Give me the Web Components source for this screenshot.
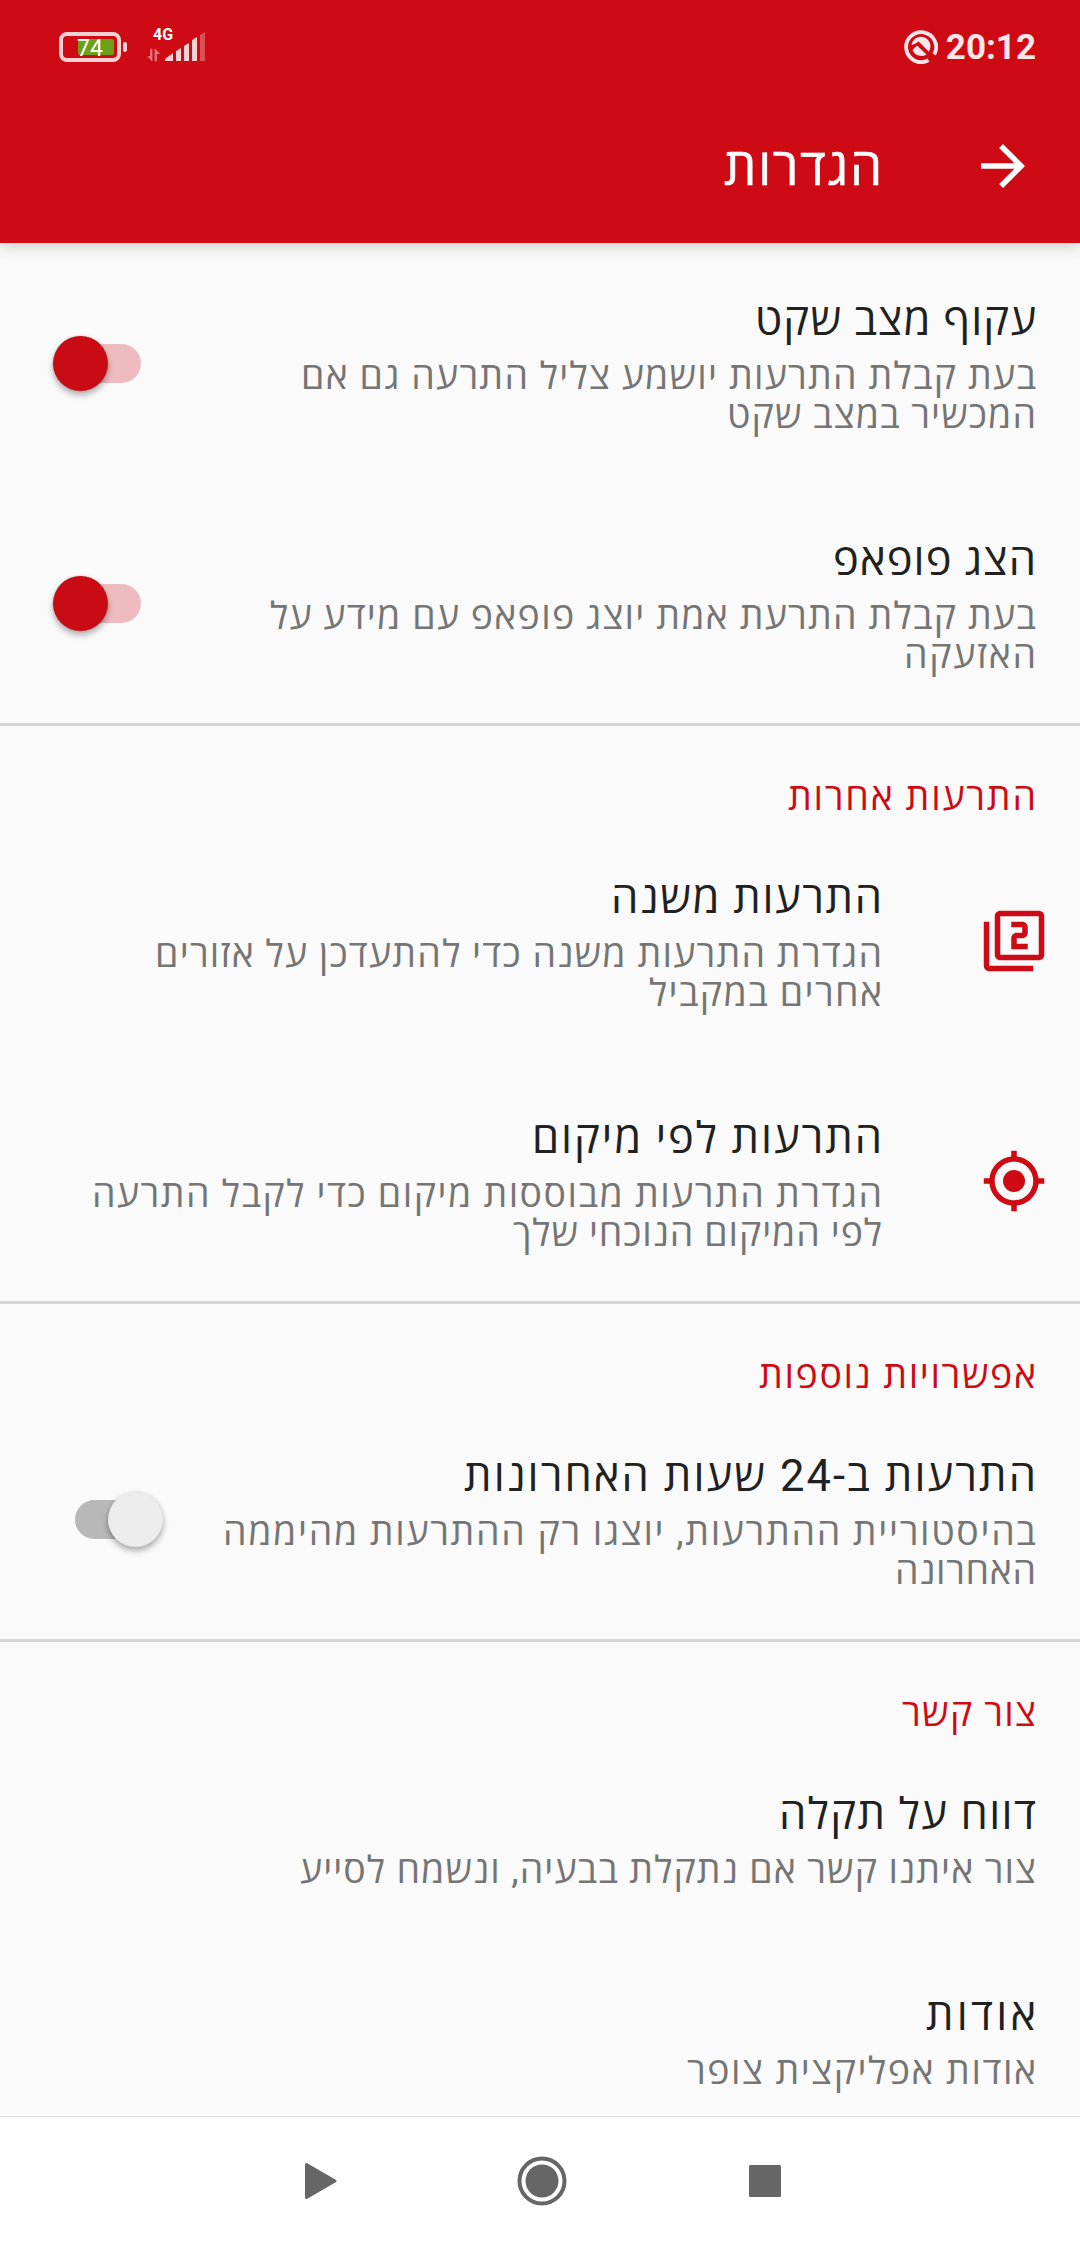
<!DOCTYPE html>
<html lang="he" dir="rtl">
<head>
<meta charset="utf-8">
<title>הגדרות</title>
<style>
  html, body { margin: 0; height: 100%; }
  body {
    background: #fafafa;
    /* Roboto for digits and punctuation, Open Sans for the Hebrew letters */
    font-family: Roboto, "Open Sans", "Noto Sans", "DejaVu Sans", sans-serif;
    overflow: hidden;
  }
</style>
</head>
<body>
<settings-screen>
  <status-bar slot="top" time="20:12" battery="74" network="4G"></status-bar>
  <app-bar slot="top"><text-line width="158">הגדרות</text-line></app-bar>

  <pref-row toggle="on">
    <text-line width="281">עקוף מצב שקט</text-line>
    <text-line slot="summary" width="735">בעת קבלת התרעות יושמע צליל התרעה גם אם</text-line>
    <text-line slot="summary" width="309">המכשיר במצב שקט</text-line>
  </pref-row>
  <pref-row toggle="on">
    <text-line width="203">הצג פופאפ</text-line>
    <text-line slot="summary" width="766">בעת קבלת התרעת אמת יוצג פופאפ עם מידע על</text-line>
    <text-line slot="summary" width="132">האזעקה</text-line>
  </pref-row>

  <pref-category><text-line width="248">התרעות אחרות</text-line></pref-category>
  <pref-row icon="filter2">
    <text-line width="271">התרעות משנה</text-line>
    <text-line slot="summary" width="727">הגדרת התרעות משנה כדי להתעדכן על אזורים</text-line>
    <text-line slot="summary" width="233">אחרים במקביל</text-line>
  </pref-row>
  <pref-row icon="location">
    <text-line width="350">התרעות לפי מיקום</text-line>
    <text-line slot="summary" width="790">הגדרת התרעות מבוססות מיקום כדי לקבל התרעה</text-line>
    <text-line slot="summary" width="369">לפי המיקום הנוכחי שלך</text-line>
  </pref-row>

  <pref-category><text-line width="277">אפשרויות נוספות</text-line></pref-category>
  <pref-row toggle="off">
    <text-line width="572">התרעות ב-24 שעות האחרונות</text-line>
    <text-line slot="summary" width="813">בהיסטוריית ההתרעות, יוצגו רק ההתרעות מהיממה</text-line>
    <text-line slot="summary" width="141">האחרונה</text-line>
  </pref-row>

  <pref-category><text-line width="134">צור קשר</text-line></pref-category>
  <pref-row>
    <text-line width="257">דווח על תקלה</text-line>
    <text-line slot="summary" width="736">צור איתנו קשר אם נתקלת בבעיה, ונשמח לסייע</text-line>
  </pref-row>
  <pref-row>
    <text-line width="110">אודות</text-line>
    <text-line slot="summary" width="349">אודות אפליקצית צופר</text-line>
  </pref-row>

  <nav-bar slot="bottom"></nav-bar>
</settings-screen>

<script>
const ICONS = {
  back: '<path d="M12 4l-1.41 1.41L16.17 11H4v2h12.17l-5.58 5.59L12 20l8-8z"/>',
  filter2: '<path d="M3 5H1v16c0 1.1.9 2 2 2h16v-2H3V5zm18-4H7c-1.1 0-2 .9-2 2v14c0 1.1.9 2 2 2h14c1.1 0 2-.9 2-2V3c0-1.1-.9-2-2-2zm0 16H7V3h14v14zm-4-4h-4v-2h2c1.1 0 2-.89 2-2V7c0-1.11-.9-2-2-2h-4v2h4v2h-2c-1.1 0-2 .89-2 2v4h6v-2z"/>',
  location: '<circle cx="12" cy="12" r="4"/><path d="M20.94 11c-.46-4.17-3.77-7.48-7.94-7.94V1h-2v2.06C6.83 3.52 3.52 6.83 3.06 11H1v2h2.06c.46 4.17 3.77 7.48 7.94 7.94V23h2v-2.06c4.17-.46 7.48-3.77 7.94-7.94H23v-2h-2.06zM12 19c-3.87 0-7-3.13-7-7s3.13-7 7-7 7 3.13 7 7-3.13 7-7 7z"/>'
};

/** Base: every component renders its markup once into an open shadow root */
class BaseElement extends HTMLElement {
  connectedCallback() {
    if (this.shadowRoot) return;
    this.attachShadow({ mode: 'open' });
    this.shadowRoot.innerHTML = this.template();
  }
}

class SettingsScreen extends BaseElement {
  template() {
    return `
      <style>
        :host { display: flex; flex-direction: column; height: 2246px; width: 1080px; }
        header { background: #ce0b14; height: 243px; flex: none; box-shadow: 0 3px 14px rgba(0, 0, 0, .2); z-index: 1; }
        main { flex: 1; min-height: 0; overflow: hidden; }
      </style>
      <header><slot name="top"></slot></header>
      <main><slot></slot></main>
      <slot name="bottom"></slot>
    `;
  }
}

class StatusBar extends BaseElement {
  template() {
    return `
      <style>
        :host {
          display: flex; direction: ltr; justify-content: space-between; align-items: center;
          height: 94px; padding: 0 44px 0 59px; box-sizing: border-box;
          font-family: Roboto, "Liberation Sans", sans-serif; color: #fbe7e8;
        }
        .group { display: flex; align-items: center; }
        svg { display: block; }
        .time { font-size: 35px; font-weight: 700; line-height: 40px; margin-left: 8px; padding-top: 2px; }
        text { font-family: Roboto, "Liberation Sans", sans-serif; }
      </style>
      <div class="group">
        <svg width="148" height="44" viewBox="0 0 148 44">
          <g transform="translate(0 -3)">
            <rect x="2" y="12" width="58" height="26" rx="6" fill="none" stroke="#f6d0d3" stroke-width="4"/>
            <rect x="64" y="20" width="4" height="10" rx="2" fill="#f6d0d3"/>
            <rect x="19" y="17" width="36" height="16" rx="2" fill="#6ba018"/>
            <text x="18" y="33.500" font-size="23" fill="#fff">${this.getAttribute('battery')}</text>
            <text x="94" y="17.500" font-size="16" font-weight="700" fill="#fff">${this.getAttribute('network')}</text>
            <path d="M93 39V27h-1.500v7.500H89zM96 27v12h1.500v-7.500h3z" fill="#e2767b" stroke="#e2767b" stroke-width=".8"/>
            <g fill="#f6d0d3">
              <path d="M106 39v-2l8-6v8zM117 39V29l5-3v13zM125 39V24l5-3v18zM133 39V18l5-3v24z"/>
              <path d="M141 39V13l5-3v29z" fill="#dd4e55"/>
            </g>
          </g>
        </svg>
      </div>
      <div class="group">
        <svg width="34" height="34" viewBox="0 0 34 34">
          <path d="M24.500 30.200A15 15 0 1 1 30.200 24.500" fill="none" stroke="#fbe7e8" stroke-width="3.800"/>
          <path d="M7.500 15a9.500 9.500 0 1 1 17 7L15 12.500z" fill="#fbe7e8"/>
          <path d="M8.500 20l4.500-4.500 9.500 9a9.500 9.500 0 0 1-14-4.500z" fill="#fbe7e8"/>
          <path d="M8 17.500l6.500-4.500 14 14" fill="none" stroke="#ce0b14" stroke-width="2.200"/>
        </svg>
        <span class="time">${this.getAttribute('time')}</span>
      </div>
    `;
  }
}

class AppBar extends BaseElement {
  template() {
    return `
      <style>
        :host { display: flex; align-items: center; height: 144px; padding-right: 44px; color: #fff; }
        svg { width: 66px; height: 66px; fill: #fff; }
        h1 { margin: 0 88px 0 0; padding-top: 4px; font-size: 51px; font-weight: 500; line-height: 70px; -webkit-text-stroke: .6px #fff; }
      </style>
      <svg viewBox="0 0 24 24">${ICONS.back}</svg>
      <h1><slot></slot></h1>
    `;
  }
}

/** One line of text, tracked out so that it fills the given width */
class TextLine extends BaseElement {
  template() {
    return `
      <style>
        :host { display: block; white-space: nowrap; }
        span { display: inline-block; line-height: inherit; }
      </style>
      <span><slot></slot></span>
    `;
  }

  fit() {
    const span = this.shadowRoot.querySelector('span');
    const chars = this.textContent.trim().length;
    const natural = span.getBoundingClientRect().width;
    const spacing = (Number(this.getAttribute('width')) - natural) / (chars - 1);
    span.style.letterSpacing = `${spacing.toFixed(3)}px`;
    // The spacing lands before the first letter too, pull it back to the edge
    span.style.marginRight = `${(-spacing).toFixed(3)}px`;
  }
}

class PrefCategory extends BaseElement {
  template() {
    return `
      <style>
        :host {
          display: block; height: 98px; padding: 47px 44px 0; box-sizing: border-box;
          border-top: 3px solid #d6d6d6; color: #ce0b14;
          font-size: 37.5px; line-height: 49px;
        }
      </style>
      <slot></slot>
    `;
  }
}

class PrefSwitch extends BaseElement {
  template() {
    return `
      <style>
        :host { display: grid; align-items: center; width: 110px; height: 55px; direction: ltr; }
        .track, .thumb { grid-area: 1 / 1; }
        .track { width: 67px; height: 39px; border-radius: 20px; background: #eebcc0; margin-left: 21px; }
        .thumb { width: 55px; height: 55px; border-radius: 50%; background: #c90b13; box-shadow: 0 4px 6px rgba(0, 0, 0, .3), 0 0 3px rgba(0, 0, 0, .12); }
        :host([state="off"]) .track { background: #b8b8b8; margin-left: 22px; }
        :host([state="off"]) .thumb { background: #ececec; justify-self: end; }
      </style>
      <div class="track"></div>
      <div class="thumb"></div>
    `;
  }
}

class PrefRow extends BaseElement {
  template() {
    const icon = this.getAttribute('icon');
    const toggle = this.getAttribute('toggle');
    return `
      <style>
        :host { display: flex; align-items: center; padding-right: ${icon ? 33 : 44}px; }
        .icon { width: 66px; height: 66px; fill: #ce0b14; margin-left: 99px; flex: none; }
        .text { flex: 1; padding: 48px 0 41px; white-space: nowrap; }
        .title { font-size: 43.5px; line-height: 60px; color: #212121; }
        .summary { font-size: 37.5px; line-height: 39px; color: #757575; padding: 6px 0 7px; }
        pref-switch { margin-left: 53px; flex: none; }
      </style>
      ${icon ? `<svg class="icon" viewBox="0 0 24 24">${ICONS[icon]}</svg>` : ''}
      <div class="text">
        <div class="title"><slot></slot></div>
        <div class="summary"><slot name="summary"></slot></div>
      </div>
      ${toggle ? `<pref-switch state="${toggle}"></pref-switch>` : ''}
    `;
  }
}

class NavBar extends BaseElement {
  template() {
    return `
      <style>
        :host {
          display: flex; direction: ltr; align-items: center; justify-content: center; gap: 173.5px;
          height: 130px; flex: none; box-sizing: border-box; border-top: 1px solid #e0e0e0;
          background: #fff; padding: 0 0 1px 3px;
        }
        svg { width: 50px; height: 50px; fill: #666; }
      </style>
      <svg viewBox="0 0 50 50"><path d="M13.500 8.500v33L42 25z" stroke="#666" stroke-width="3" stroke-linejoin="round"/></svg>
      <svg viewBox="0 0 50 50"><circle cx="25" cy="25" r="16.500"/><circle cx="25" cy="25" r="22.500" fill="none" stroke="#666" stroke-width="4"/></svg>
      <svg viewBox="0 0 50 50"><rect x="9" y="9" width="32" height="32" rx="1.500"/></svg>
    `;
  }
}

customElements.define('settings-screen', SettingsScreen);
customElements.define('status-bar', StatusBar);
customElements.define('app-bar', AppBar);
customElements.define('pref-category', PrefCategory);
customElements.define('pref-switch', PrefSwitch);
customElements.define('pref-row', PrefRow);
customElements.define('nav-bar', NavBar);
customElements.define('text-line', TextLine);

// Sizes are inherited from the parents, so fit once everything is defined
document.querySelectorAll('text-line').forEach(line => line.fit());
</script>
</body>
</html>
